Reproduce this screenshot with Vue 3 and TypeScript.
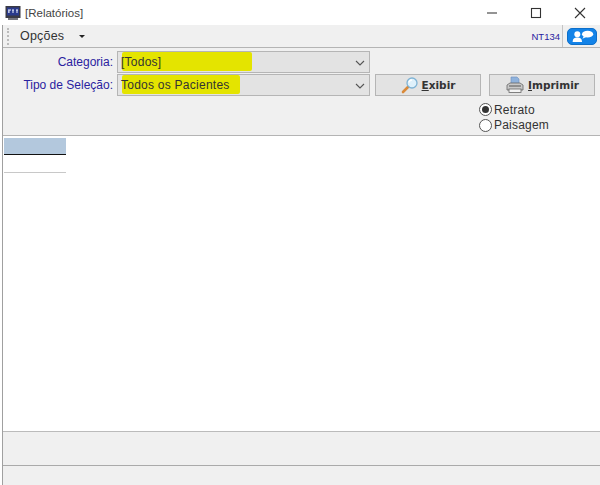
<script setup lang="ts">
interface Field { label: string; value: string; mark: number; action?: boolean }
const fields: Field[] = [
  { label: 'Categoria:', value: '[Todos]', mark: 130 },
  { label: 'Tipo de Seleção:', value: 'Todos os Pacientes', mark: 118 },
]
</script>

<template>
  <div class="window">
    <header class="titlebar">
      <svg class="appicon" width="16" height="16" viewBox="0 0 16 16">
        <rect x="0.5" y="1" width="15" height="12" fill="#3a3a44" />
        <rect x="2" y="2.5" width="12" height="8" fill="#2a3a8c" />
        <path d="M3 5h3M3 7h1M7 5h2M8 5v3M11 5h2M12 5v3M4 5v3" stroke="#e8eefc" stroke-width="1" fill="none" />
        <rect x="3" y="13" width="10" height="2" fill="#77777f" />
      </svg>
      <span class="title">[Relatórios]</span>
      <div class="controls">
        <svg width="12" height="12" viewBox="0 0 12 12"><path d="M1 6h10" stroke="#666" stroke-width="1.4" /></svg>
        <svg width="12" height="12" viewBox="0 0 12 12"><rect x="1.5" y="1.5" width="9" height="9" fill="none" stroke="#333" stroke-width="1.1" /></svg>
        <svg width="12" height="12" viewBox="0 0 12 12"><path d="M1 1l10 10M11 1L1 11" stroke="#333" stroke-width="1.1" /></svg>
      </div>
    </header>

    <div class="frame">
      <nav class="toolbar">
        <span class="grip"></span>
        <span class="menu">Opções</span>
        <span class="caret"></span>
        <span class="spacer"></span>
        <span class="user">NT134</span>
        <span class="sep"></span>
        <span class="chat">
          <svg width="30" height="17" viewBox="0 0 30 17">
            <circle cx="10" cy="6" r="3.2" fill="#fff" />
            <path d="M5 14.5c0-4 2-5 5-5s5 1 5 5z" fill="#fff" />
            <ellipse cx="21" cy="6" rx="6" ry="3.6" fill="#fff" />
            <path d="M17 8l-1.5 3 4-2z" fill="#fff" />
          </svg>
        </span>
      </nav>

      <section class="form">
        <div class="rows">
          <div v-for="field in fields" :key="field.label" class="row">
            <label class="label">{{ field.label }}</label>
            <div class="select">
              <span class="mark" :style="{ width: field.mark + 'px' }"></span>
              <span class="value">{{ field.value }}</span>
              <svg class="chev" width="10" height="6" viewBox="0 0 10 6"><path d="M1 1l4 4 4-4" fill="none" stroke="#555" stroke-width="1.1" /></svg>
            </div>
          </div>
        </div>
        <div class="side">
          <div class="buttons">
            <button class="btn">
              <svg width="18" height="18" viewBox="0 0 18 18">
                <path d="M7.5 10.5L2 16" stroke="#d98a3a" stroke-width="2.6" stroke-linecap="round" />
                <circle cx="11" cy="7" r="5" fill="#dff1fb" stroke="#7fb3d5" stroke-width="1.3" />
                <path d="M8 6.5a3 3 0 0 1 3-2.5" stroke="#fff" stroke-width="1.4" fill="none" />
              </svg>
              <span><u>E</u>xibir</span>
            </button>
            <button class="btn">
              <svg width="20" height="18" viewBox="0 0 20 18">
                <path d="M6 1h6l2 2v5H6z" fill="#8fb2dc" stroke="#6d8fc0" stroke-width="0.6" />
                <path d="M2 9l3-2h10l3 2v5H2z" fill="#c9c9c9" stroke="#666" stroke-width="0.8" />
                <rect x="4" y="13" width="12" height="3.5" fill="#f4f4f4" stroke="#666" stroke-width="0.8" />
                <path d="M4 10h12" stroke="#555" stroke-width="1" />
              </svg>
              <span><u>I</u>mprimir</span>
            </button>
          </div>
          <div class="radios">
            <label class="radio"><span class="dot on"></span>Retrato</label>
            <label class="radio"><span class="dot"></span>Paisagem</label>
          </div>
        </div>
      </section>

      <main class="content">
        <div class="cell-head"></div>
        <div class="cell-line"></div>
      </main>

      <div class="status"></div>
      <div class="status last"></div>
    </div>
  </div>
</template>

<style>
html, body { margin: 0; background: #fff; }
</style>

<style scoped>
.window {
  width: 600px;
  height: 485px;
  display: flex;
  flex-direction: column;
  overflow: hidden;
  background: #fff;
  font-family: "Liberation Sans", Arial, sans-serif;
  font-size: 12px;
  color: #333;
}
.titlebar {
  height: 25px;
  flex: none;
  display: flex;
  align-items: center;
  padding-left: 5px;
  gap: 4px;
}
.appicon { flex: none; }
.title { color: #444; font-size: 11.5px; }
.controls {
  margin-left: auto;
  display: flex;
  gap: 32px;
  padding-right: 14px;
  padding-top: 0;
}
.frame {
  flex: 1;
  min-height: 0;
  margin-left: 2px;
  border-left: 1px solid #a0a0a0;
  display: flex;
  flex-direction: column;
}
.toolbar {
  height: 22px;
  flex: none;
  display: flex;
  align-items: center;
  background: #f0f0f0;
  border-bottom: 1px solid #b4b4b4;
  box-sizing: content-box;
}
.grip {
  width: 1px;
  height: 17px;
  margin-left: 4px;
  border-left: 2px dotted #bbb;
}
.menu { margin-left: 10px; font-size: 12.5px; color: #333; letter-spacing: 0.2px; }
.caret {
  margin-left: 15px;
  width: 0;
  height: 0;
  border-left: 3px solid transparent;
  border-right: 3px solid transparent;
  border-top: 3px solid #222;
}
.spacer { flex: 1; }
.user { color: #2a22a0; font-size: 9.5px; margin-right: 2px; }
.sep { width: 1px; height: 22px; background: #c4c4c4; margin: 0 4px 0 0; }
.chat {
  width: 30px;
  height: 17px;
  margin-right: 3px;
  border-radius: 5px;
  background: #1383e8;
  border: 1px solid #0d6fca;
  box-sizing: border-box;
  display: flex;
  align-items: center;
  justify-content: center;
  overflow: hidden;
}
.form {
  height: 88px;
  flex: none;
  display: flex;
  background: #f0f0f0;
  border-bottom: 1px solid #b4b4b4;
  padding-top: 3px;
  box-sizing: border-box;
}
.rows { display: flex; flex-direction: column; gap: 1px; }
.row { display: flex; align-items: center; height: 22px; }
.label {
  width: 110px;
  text-align: right;
  color: #2a22a0;
  font-size: 12px;
  flex: none;
}
.select {
  position: relative;
  margin-left: 4px;
  width: 253px;
  height: 22px;
  box-sizing: border-box;
  background: #e3e3e3;
  border: 1px solid #b5b5b5;
  display: flex;
  align-items: center;
  padding-left: 3px;
}
.mark {
  position: absolute;
  left: 4px;
  top: 0;
  height: 19px;
  background: #e4e400;
  border-radius: 2px;
}
.value { position: relative; color: #333; letter-spacing: 0.25px; }
.chev { position: absolute; right: 4px; top: 8px; }
.side { margin-left: 5px; padding-top: 23px; width: 220px; }
.buttons { display: flex; gap: 8px; }
.btn {
  width: 106px;
  height: 22px;
  padding: 0;
  background: #e3e3e3;
  border: 1px solid #b5b5b5;
  display: flex;
  align-items: center;
  justify-content: center;
  gap: 3px;
  font-family: "DejaVu Sans", sans-serif;
  font-weight: 700;
  font-size: 10.5px;
  color: #333;
}
.radios {
  margin: 7px 0 0 104px;
  display: flex;
  flex-direction: column;
  gap: 2px;
}
.radio {
  display: flex;
  align-items: center;
  gap: 2px;
  height: 13.5px;
  font-size: 12px;
  color: #333;
  letter-spacing: 0.2px;
}
.dot {
  width: 13px;
  height: 13px;
  box-sizing: border-box;
  border: 1px solid #555;
  border-radius: 50%;
  background: #fff;
  flex: none;
  position: relative;
}
.dot.on::after {
  content: "";
  position: absolute;
  inset: 2px;
  border-radius: 50%;
  background: #333;
}
.content {
  flex: 1;
  min-height: 0;
  background: #fff;
  padding-top: 2px;
}
.cell-head {
  width: 62px;
  margin-left: 1px;
  height: 16px;
  background: #b3c8dd;
  border-bottom: 1px solid #111;
}
.cell-line {
  width: 62px;
  margin: 17px 0 0 1px;
  border-bottom: 1px solid #c8c8c8;
}
.status {
  height: 33px;
  flex: none;
  background: #f0f0f0;
  border-top: 1px solid #bbb;
  box-sizing: content-box;
}
.status.last { height: 19px; border-top: 1px solid #aaa; }
</style>
